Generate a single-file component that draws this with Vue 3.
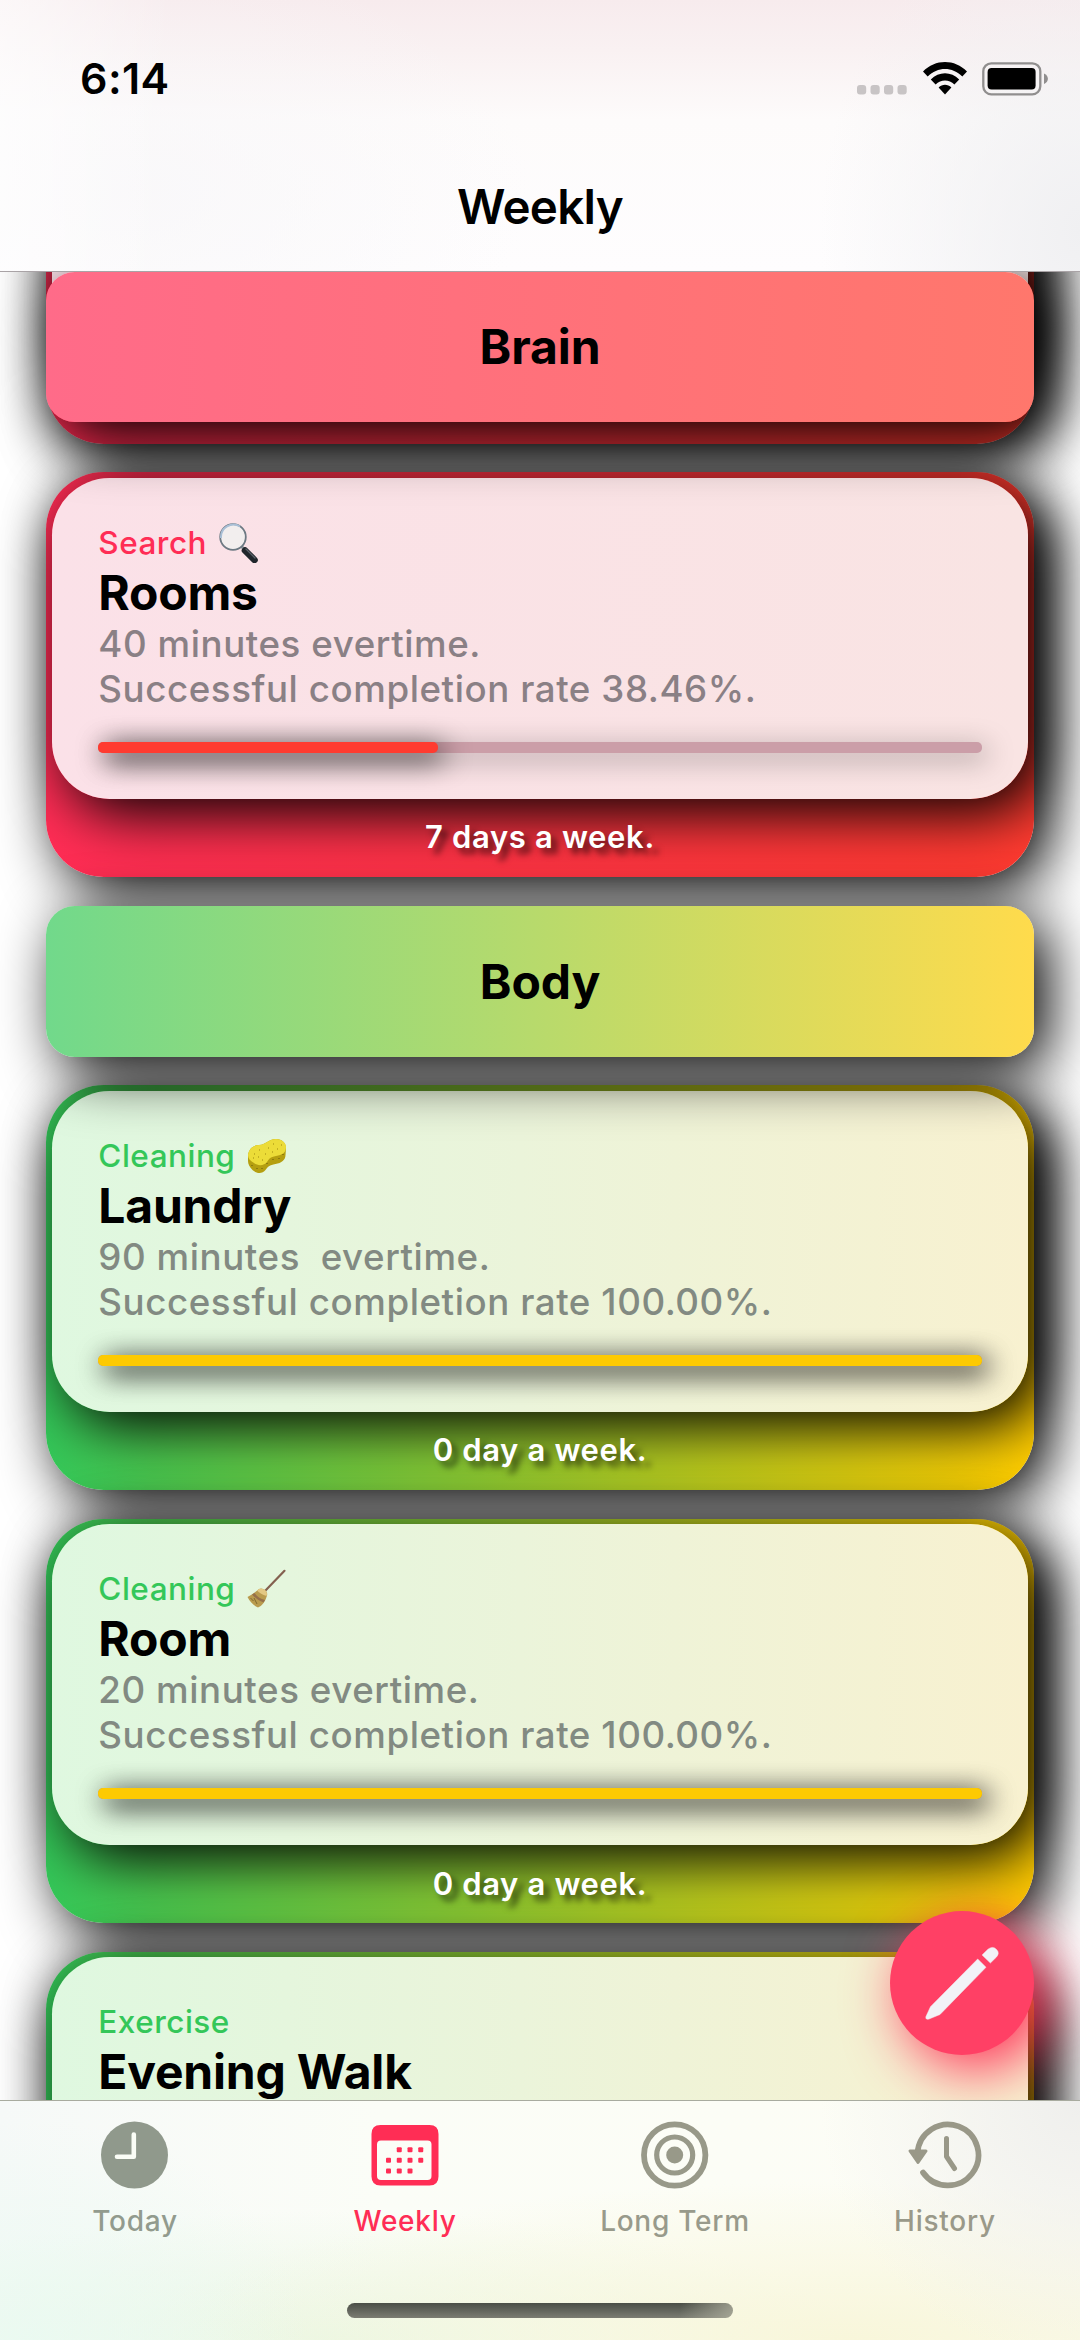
<script setup>
const cards = [
  { theme: 'brain', category: '', emoji: '', title: '', time: '', rate: '', progress: 0, days: '' },
  { theme: 'brain', category: 'Search', emoji: 'search', title: 'Rooms', time: '40 minutes evertime.', rate: 'Successful completion rate 38.46%.', progress: 38.46, days: '7 days a week.' },
  { theme: 'body', category: 'Cleaning', emoji: 'sponge', title: 'Laundry', time: '90 minutes  evertime.', rate: 'Successful completion rate 100.00%.', progress: 100, days: '0 day a week.' },
  { theme: 'body', category: 'Cleaning', emoji: 'broom', title: 'Room', time: '20 minutes evertime.', rate: 'Successful completion rate 100.00%.', progress: 100, days: '0 day a week.' },
  { theme: 'body', category: 'Exercise', emoji: '', title: 'Evening Walk', time: '', rate: '', progress: 100, days: '' },
]
const sections = [
  { name: '', items: cards.slice(0, 2) },
  { name: 'Body', items: cards.slice(2) },
]
const dots = [[1, 0], [2, 0], [3, 0], [0, 1], [1, 1], [2, 1], [3, 1], [0, 2], [1, 2], [2, 2]]
</script>

<template>
  <div class="screen">
    <header class="nav">
      <div class="status">
        <span class="clock">6:14</span>
        <div class="indicators">
          <svg class="cell" width="50" height="10" viewBox="0 0 50 10">
            <rect v-for="i in 4" :key="i" :x="(i - 1) * 13.5" y="0" width="9.2" height="9.4" rx="3" fill="#c8c4c5" />
          </svg>
          <svg class="wifi" width="44" height="33" viewBox="0 0 44 33">
            <path d="M0 9.6C12-3.2 32-3.2 44 9.6l-4.7 5C29.500 4.500 14.500 4.500 4.700 14.600z" />
            <path d="M7.800 17.600c8-8.400 20.400-8.400 28.400 0l-4.800 5c-5.300-5.400-13.500-5.400-18.800 0z" />
            <path d="M15.600 25.600c3.600-3.800 9.200-3.800 12.800 0L22 32.400z" />
          </svg>
          <svg class="battery" width="67" height="34" viewBox="0 0 67 34">
            <rect x="1.300" y="1.300" width="57" height="31" rx="8" fill="none" stroke="#908e8e" stroke-width="2.300" />
            <rect x="5.600" y="6" width="48" height="21.500" rx="4" />
            <path d="M62 11.500c5.200 2 5.200 8.600 0 10.600z" fill="#908e8e" />
          </svg>
        </div>
      </div>
      <h1 class="title">Weekly</h1>
    </header>

    <main class="viewport">
      <div class="list">
        <section v-for="(section, s) in sections" :key="s" class="section">
          <div v-if="section.name" class="section-header body"><span>{{ section.name }}</span></div>
          <article v-for="(card, c) in section.items" :key="c" class="card" :class="card.theme">
            <div class="inner">
              <div class="category">
                <span>{{ card.category }}</span>
                <svg v-if="card.emoji === 'search'" class="emoji" viewBox="0 0 40 40">
                  <path d="M22 23l5 5" stroke="#8d959b" stroke-width="3" />
                  <path d="M26 27.500l9.500 9.500" stroke="#20262b" stroke-width="6.600" stroke-linecap="round" />
                  <path d="M27 26l9 9" stroke="#5a626a" stroke-width="1.300" stroke-linecap="round" />
                  <circle cx="14" cy="14" r="12.800" fill="#f2eeee" stroke="#6d7983" stroke-width="1.800" />
                  <path d="M2 15A12.500 12.500 0 0 1 21 3.500" fill="none" stroke="#a9bfd6" stroke-width="2" />
                </svg>
                <svg v-else-if="card.emoji === 'sponge'" class="emoji" viewBox="0 -3 40 40">
                  <path d="M1 16C2 9 7 6 12 6c7 0 9-6 17-6 6 0 10 4 10 9l-.5 7c0 5-4 8-10 9-6 1-8 3-10 6-3 4-9 4-13 0-3-3-4.500-6-4.500-9z" fill="#b59f10" />
                  <path d="M1 16C2 9 7 6 12 6c7 0 9-6 17-6 6 0 10 4 10 8 0 6-4 8-10 9-6 1-7 3-9 6-3 4-9 4-13 1-4-2-6-5-6-8z" fill="#ecdc38" />
                  <path d="M7 15h1M12 11h1M11 18h1M18 15h1M21 9h1M26 5h1M30 10h1M34 6h1M25 13h1M15 21h1M6 19h1" stroke="#b8a41c" stroke-width="1.500" />
                  <path d="M5 26v1M10 29v1M15 29v1M20 24v1M26 20v1M32 19v1M36 15v1" stroke="#82730c" stroke-width="1.500" />
                </svg>
                <svg v-else-if="card.emoji === 'broom'" class="emoji" viewBox="0 0 40 40">
                  <path d="M18 22L37.500 1.800" stroke="#84604f" stroke-width="2.200" stroke-linecap="round" />
                  <path d="M12 20c2-1 4-.5 6 1 2 2 3 4 1.500 7C18 33 15 37 11 38.500 7 37 3 33 .5 28c4-2 8-5 11.500-8z" fill="#b99b4e" />
                  <path d="M12 20c2-1 4-.5 6 1 2 2 2.500 4 1.500 6-4-1-7-3-9.500-5.500z" fill="#e3c883" />
                  <path d="M7.500 24c2.500 3.500 6 6 10.500 7l-1.500 2.500C12 32 8 29 5 25.500z" fill="#96704a" />
                  <path d="M3.500 29l3 3M7 29l3 6" stroke="#806a30" stroke-width="1" />
                </svg>
              </div>
              <h2 class="name">{{ card.title }}</h2>
              <p class="detail">{{ card.time }}</p>
              <p class="detail">{{ card.rate }}</p>
              <div class="track"><div class="fill" :style="{ width: card.progress + '%' }"></div></div>
            </div>
            <p class="days">{{ card.days }}</p>
          </article>
        </section>
      </div>
      <div class="section-header brain pinned"><span>Brain</span></div>
      <button class="fab" aria-label="Edit">
        <svg width="144" height="144" viewBox="0 0 144 144" fill="#f2f2f7" stroke="#f2f2f7" stroke-linejoin="round">
          <path d="M92.100 44L98 38.200Q103 34.500 106.500 38.500Q110 42 106.500 46L100.400 52z" stroke-width=".5" />
          <path d="M87.700 48L96 56.300L50 103.500L39 108Q35 109 36 105.500L40.500 95.700z" stroke-width=".5" />
        </svg>
      </button>
    </main>

    <footer class="tabbar">
      <nav class="tabs">
        <a class="tab today">
          <svg width="72" height="70" viewBox="0 0 72 70">
            <circle cx="35.500" cy="35" r="33.500" fill="#90998c" />
            <path d="M34.800 14.500v22.300H18" fill="none" stroke="#fafdf6" stroke-width="4.600" stroke-linecap="round" stroke-linejoin="round" />
          </svg>
          <span>Today</span>
        </a>
        <a class="tab active">
          <svg width="72" height="70" viewBox="0 0 72 70" fill="#ff2d55">
            <path fill-rule="evenodd" d="M11.500 5h49q9 0 9 9v42.500q0 9-9 9h-49q-9 0-9-9V14q0-9 9-9zM12 20.500q-4 0-4 4V56q0 4 4 4h46.500q4 0 4-4V24.500q0-4-4-4z" />
            <rect v-for="(d, i) in dots" :key="i" :x="17 + d[0] * 10.750" :y="27.200 + d[1] * 10.600" width="5" height="5" rx="1" />
          </svg>
          <span>Weekly</span>
        </a>
        <a class="tab term">
          <svg width="72" height="70" viewBox="0 0 72 70" fill="none" stroke="#989989">
            <circle cx="35.700" cy="35" r="30.700" stroke-width="5.800" />
            <circle cx="35.700" cy="35" r="18" stroke-width="5.200" />
            <circle cx="35.700" cy="35" r="8.500" fill="#989989" stroke="none" />
          </svg>
          <span>Long Term</span>
        </a>
        <a class="tab history">
          <svg width="80" height="70" viewBox="-4 0 80 70" fill="none" stroke="#999888" stroke-linecap="round" stroke-linejoin="round">
            <path d="M8.500 33A30.500 30.500 0 1 1 14 52.500" stroke-width="5.700" />
            <path d="M1 31h16l-8 11.500z" fill="#999888" stroke-width="3" />
            <path d="M37.500 18.500v18l8 12" stroke-width="5" />
          </svg>
          <span>History</span>
        </a>
      </nav>
      <div class="home"></div>
    </footer>
  </div>
</template>

<style>
body {
  background: #fff;
}
</style>

<style scoped>
.screen {
  width: 1080px;
  height: 2340px;
  overflow: hidden;
  display: flex;
  flex-direction: column;
  background: #fff;
  color: #000;
  font-family: Inter, "Liberation Sans", sans-serif;
}
h1, h2, p {
  margin: 0;
  font-weight: inherit;
}
.nav {
  flex: none;
  box-sizing: border-box;
  height: 271.500px;
  border-bottom: 1px solid #a9a3a6;
  background:
    linear-gradient(90deg, rgba(255, 255, 255, .6), rgba(255, 255, 255, 0) 16%),
    radial-gradient(260px 330px at 1080px 230px, rgba(240, 240, 242, 1), rgba(241, 241, 243, 0)),
    radial-gradient(400px 240px at 130px 190px, rgba(248, 247, 249, .8), rgba(248, 247, 250, 0)),
    linear-gradient(180deg, #f7ebed 0, #f9f1f2 50px, #fdfbfb 120px, #fefdfe 100%);
}
.status {
  display: flex;
  justify-content: space-between;
  height: 158px;
}
.clock {
  margin: 52px 0 0 80px;
  font-size: 43px;
  line-height: 52px;
  font-weight: 600;
  letter-spacing: .4px;
}
.indicators {
  display: flex;
  margin: 62px 31.500px 0 0;
}
.cell {
  margin: 23px 15.500px 0 0;
}
.wifi {
  margin-right: 15px;
}
.title {
  text-align: center;
  font-size: 47.500px;
  line-height: 58px;
  margin-top: 20px;
  font-weight: 600;
  letter-spacing: -.7px;
}
.viewport {
  position: relative;
  flex: none;
  height: 1828.500px;
  overflow: hidden;
}
.list {
  margin-top: -232.200px;
  padding: 0 46px;
}
.section-header {
  position: relative;
  z-index: 2;
  height: 151.200px;
  margin-bottom: 28.800px;
  border-radius: 28.800px;
  display: flex;
  align-items: center;
  justify-content: center;
  font-size: 48px;
  font-weight: 700;
  letter-spacing: -.1px;
  box-shadow: 14px 14px 58px #000;
}
.section-header.brain {
  background: linear-gradient(90deg, #ff6b89, #ff776c);
}
.section-header.body {
  background: linear-gradient(90deg, #71d98b, #ffdb4c);
}
.section-header.pinned {
  position: absolute;
  top: 0;
  left: 46px;
  width: 988px;
  height: 150.500px;
}
.card {
  box-sizing: border-box;
  height: 404.300px;
  margin-bottom: 28.800px;
  padding: 5.800px;
  border-radius: 57.600px;
  box-shadow: 14px 14px 58px #000;
}
.card.brain {
  background: linear-gradient(90deg, #ff2d55, #ff3b30);
}
.card.body {
  background: linear-gradient(90deg, #34c759, #ffcc00);
}
.inner {
  box-sizing: border-box;
  height: 320.700px;
  padding: 42.800px 46px 0 46.500px;
  border-radius: 57.600px;
  box-shadow: 14px 14px 58px #000;
}
.brain .inner {
  background: linear-gradient(90deg, #fbe1e8, #f9e4e3);
}
.body .inner {
  background: linear-gradient(90deg, #dff8e0, #ebf4da 48%, #f8f1d0);
}
.category {
  display: flex;
  align-items: center;
  gap: 12px;
  height: 43px;
  padding-bottom: 1px;
  font-size: 31.500px;
  font-weight: 550;
  letter-spacing: .5px;
}
.brain .category {
  color: #ff2d55;
}
.body .category {
  color: #34c759;
}
.emoji {
  width: 40px;
  height: 40px;
  fill: none;
}
.name {
  height: 56px;
  line-height: 55px;
  font-size: 48px;
  font-weight: 700;
  letter-spacing: -.2px;
}
.detail {
  height: 45px;
  line-height: 45px;
  font-size: 36.700px;
  font-weight: 550;
  letter-spacing: .57px;
  white-space: pre;
  color: #8a8085;
}
.body .detail {
  color: #828a82;
}
.track {
  margin-top: 30.500px;
  height: 11.500px;
  border-radius: 5px;
  background: #cb9ea8;
  box-shadow: 6px 6px 28px rgba(0, 0, 0, .4);
}
.fill {
  height: 100%;
  border-radius: 5px;
  box-shadow: 6px 6px 28px #000;
}
.brain .fill {
  background: #ff3b30;
}
.body .fill {
  background: #fdca02;
}
.days {
  margin-top: 18.500px;
  line-height: 40px;
  text-align: center;
  font-size: 31px;
  font-weight: 600;
  letter-spacing: .65px;
  color: #fff;
  text-shadow: 6px 6px 6px rgba(0, 0, 0, .6);
}
.fab {
  position: absolute;
  z-index: 3;
  right: 46px;
  bottom: 45.500px;
  width: 144px;
  height: 144px;
  padding: 0;
  border: 0;
  border-radius: 50%;
  background: #ff4065;
  box-shadow: 14px 14px 58px #ff2d55;
}
.fab svg {
  display: block;
}
.tabbar {
  flex: 1;
  display: flex;
  flex-direction: column;
  align-items: center;
  border-top: 1px solid #a8ab9f;
  background:
    radial-gradient(260px 260px at 1080px 0, rgba(239, 239, 237, 1), rgba(240, 240, 236, 0)),
    radial-gradient(280px 220px at 30px 240px, rgba(233, 250, 241, .8), rgba(233, 250, 241, 0)),
    radial-gradient(700px 160px at 850px 240px, rgba(248, 246, 218, 1), rgba(248, 246, 220, 0)),
    radial-gradient(520px 130px at 330px 240px, rgba(232, 246, 226, .9), rgba(234, 246, 228, 0)),
    linear-gradient(90deg, #f6f9f8, #fbfdf7 35%, #fdfdf5);
}
.tabs {
  display: flex;
  align-self: stretch;
  padding-top: 19px;
}
.tab {
  flex: 1;
  display: flex;
  flex-direction: column;
  align-items: center;
  font-size: 28px;
  line-height: 34px;
  font-weight: 500;
  letter-spacing: .75px;
}
.tab span {
  margin-top: 13.500px;
}
.today { color: #929b8e; }
.active { color: #ff2d55; }
.term { color: #989a8b; }
.history { color: #9a9989; }
.home {
  width: 386px;
  height: 15px;
  margin-top: 65px;
  border-radius: 8px;
  background:
    linear-gradient(100deg, rgba(175, 175, 158, 0) 86%, rgba(175, 175, 158, .8)),
    linear-gradient(180deg, #4a4e47, #7b7c72);
}
</style>
